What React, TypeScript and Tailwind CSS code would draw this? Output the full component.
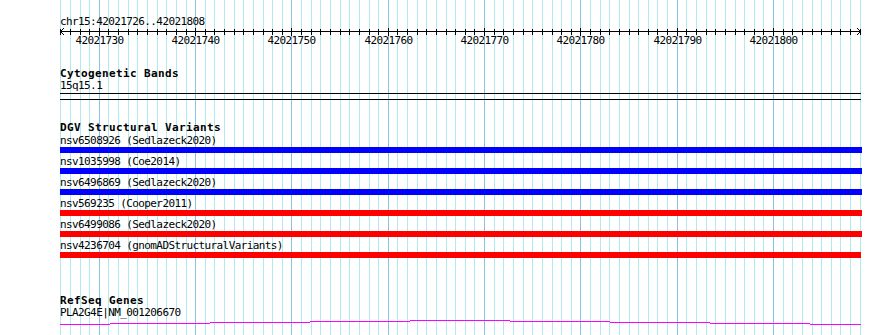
import React from 'react';

const START = 42021726;
const END = 42021808;
const BP_COUNT = END - START + 1;
const LEFT = 60;
const HEIGHT = 335;

// pixel column of the grid line for base i (0 = START)
const xAt = (i: number) => Math.round(60.3 + i * 9.632);

type Variant = { id: string; study: string; color: string; width: string };

const variants: Variant[] = [
  { id: 'nsv6508926', study: 'Sedlazeck2020', color: 'bg-[#0000ff]', width: 'w-[802px]' },
  { id: 'nsv1035998', study: 'Coe2014', color: 'bg-[#0000ff]', width: 'w-[802px]' },
  { id: 'nsv6496869', study: 'Sedlazeck2020', color: 'bg-[#0000ff]', width: 'w-[802px]' },
  { id: 'nsv569235', study: 'Cooper2011', color: 'bg-[#ff0000]', width: 'w-[802px]' },
  { id: 'nsv6499086', study: 'Sedlazeck2020', color: 'bg-[#ff0000]', width: 'w-[802px]' },
  { id: 'nsv4236704', study: 'gnomADStructuralVariants', color: 'bg-[#ff0000]', width: 'w-[801px]' },
];

// intron connector, drawn as stepped segments [x1, x2, y]
const geneSteps: [number, number, number][] = [
  [60, 110, 324],
  [110, 210, 323],
  [210, 310, 322],
  [310, 410, 321],
  [410, 510, 320],
  [510, 610, 321],
  [610, 710, 322],
  [710, 810, 323],
  [810, 861, 324],
];

const small = 'text-[11px] leading-[12px] tracking-[-0.6px]';
const bold = 'text-[11px] font-bold leading-[12px] tracking-[0.38px]';

const Grid: React.FC = () => (
  <svg
    className="pointer-events-none absolute left-0 top-0 h-[335px] w-[890px]"
    shapeRendering="crispEdges"
  >
    {Array.from({ length: BP_COUNT + 1 }, (_, i) => {
      const major = (START + i) % 10 === 0;
      return (
        <rect
          key={i}
          x={xAt(i)}
          y={0}
          width={1}
          height={HEIGHT}
          fill={major ? '#87c3e6' : '#aeeaee'}
        />
      );
    })}
  </svg>
);

const Ruler: React.FC = () => (
  <svg className="block h-[18px] w-[802px] overflow-visible" shapeRendering="crispEdges">
    <rect x={0} y={3} width={801} height={1} fill="#000" />
    {Array.from({ length: BP_COUNT + 1 }, (_, i) => {
      const major = (START + i) % 10 === 0;
      const x = xAt(i) - LEFT;
      return major ? (
        <g key={i}>
          <rect x={x} y={0} width={1} height={8} fill="#000" />
          <text
            x={x + 0.5}
            y={16}
            textAnchor="middle"
            fontSize={11}
            letterSpacing={-0.6}
            fontFamily="'DejaVu Sans Mono', 'Liberation Mono', monospace"
            fill="#000"
            shapeRendering="auto"
          >
            {START + i}
          </text>
        </g>
      ) : (
        <rect key={i} x={x} y={1} width={1} height={6} fill="#000" />
      );
    })}
    <polyline points="4,0 0.5,3.5 4,7" fill="none" stroke="#000" strokeWidth={1} />
    <polyline points="797,0 800.5,3.5 797,7" fill="none" stroke="#000" strokeWidth={1} />
  </svg>
);

const GeneModel: React.FC = () => (
  <svg className="block h-[6px] w-[802px]" shapeRendering="crispEdges">
    {geneSteps.map(([x1, x2, y]) => (
      <rect key={x1} x={x1 - LEFT} y={y - 319} width={x2 - x1} height={1} fill="#ff00ff" />
    ))}
  </svg>
);

export default function App() {
  return (
    <div className="relative h-[335px] w-[890px] overflow-hidden bg-white font-['DejaVu_Sans_Mono','Liberation_Mono',monospace] text-black">
      <Grid />
      <div className="relative pl-[60px]">
        <div className={`pt-[15px] ${small} leading-[13px]`}>chr15:42021726..42021808</div>
        <Ruler />

        <section className="mt-[22px]">
          <h2 className={bold}>Cytogenetic Bands</h2>
          <div className={small}>15q15.1</div>
          <div className="mt-[1px] h-[7px] w-[801px] border-y border-black" />
        </section>

        <section className="mt-[22px]">
          <h2 className={bold}>DGV Structural Variants</h2>
          <div className="mt-[1px] flex flex-col gap-[3px]">
            {variants.map(v => (
              <div key={v.id}>
                <div className={`${small} whitespace-pre`}>
                  {v.id} ({v.study})
                </div>
                <div className={`h-[6px] ${v.width} ${v.color}`} />
              </div>
            ))}
          </div>
        </section>

        <section className="mt-[37px]">
          <h2 className={bold}>RefSeq Genes</h2>
          <div className={small}>PLA2G4E|NM_001206670</div>
          <GeneModel />
        </section>
      </div>
    </div>
  );
}
